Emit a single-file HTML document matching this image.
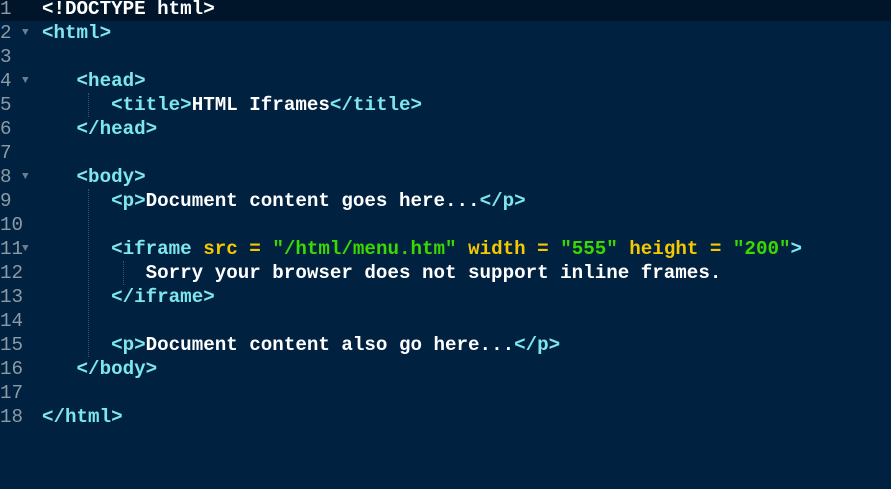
<!DOCTYPE html>
<html><head><style>
html,body{margin:0;padding:0;width:891px;height:489px;overflow:hidden;background:#002240;}
.ed{position:relative;font-family:"Liberation Mono",monospace;font-size:19.2px;font-weight:bold;}
.l{position:absolute;left:0;height:24px;line-height:24px;width:891px;white-space:pre;}
.n{position:absolute;left:0;width:16px;text-align:left;color:#8c9aa6;font-weight:normal;}
.f{position:absolute;left:22px;color:#6a7d8d;font-size:11px;font-weight:normal;}
.c{position:absolute;left:42px;color:#fff;}
.t{color:#7ee6ee}.a{color:#f5c800}.s{color:#3ad900}
.act{background:#00152a;}
.g{position:absolute;width:0;border-left:1px dotted #3a5570;}
</style></head><body><div class="ed">
<div class="l act" style="top:-3px"><span class="n">1</span><span class="c"><span>&lt;!DOCTYPE html&gt;</span></span></div>
<div class="l" style="top:21px"><span class="n">2</span><span class="f">▼</span><span class="c t">&lt;html&gt;</span></div>
<div class="l" style="top:45px"><span class="n">3</span></div>
<div class="l" style="top:69px"><span class="n">4</span><span class="f">▼</span><span class="c">   <span class="t">&lt;head&gt;</span></span></div>
<div class="l" style="top:93px"><span class="n">5</span><span class="c">      <span class="t">&lt;title&gt;</span>HTML Iframes<span class="t">&lt;/title&gt;</span></span></div>
<div class="l" style="top:117px"><span class="n">6</span><span class="c">   <span class="t">&lt;/head&gt;</span></span></div>
<div class="l" style="top:141px"><span class="n">7</span></div>
<div class="l" style="top:165px"><span class="n">8</span><span class="f">▼</span><span class="c">   <span class="t">&lt;body&gt;</span></span></div>
<div class="l" style="top:189px"><span class="n">9</span><span class="c">      <span class="t">&lt;p&gt;</span>Document content goes here...<span class="t">&lt;/p&gt;</span></span></div>
<div class="l" style="top:213px"><span class="n">10</span></div>
<div class="l" style="top:237px"><span class="n">11</span><span class="f">▼</span><span class="c">      <span class="t">&lt;iframe </span><span class="a">src = </span><span class="s">"/html/menu.htm"</span> <span class="a">width = </span><span class="s">"555"</span> <span class="a">height = </span><span class="s">"200"</span><span class="t">&gt;</span></span></div>
<div class="l" style="top:261px"><span class="n">12</span><span class="c">         Sorry your browser does not support inline frames.</span></div>
<div class="l" style="top:285px"><span class="n">13</span><span class="c">      <span class="t">&lt;/iframe&gt;</span></span></div>
<div class="l" style="top:309px"><span class="n">14</span></div>
<div class="l" style="top:333px"><span class="n">15</span><span class="c">      <span class="t">&lt;p&gt;</span>Document content also go here...<span class="t">&lt;/p&gt;</span></span></div>
<div class="l" style="top:357px"><span class="n">16</span><span class="c">   <span class="t">&lt;/body&gt;</span></span></div>
<div class="l" style="top:381px"><span class="n">17</span></div>
<div class="l" style="top:405px"><span class="n">18</span><span class="c t">&lt;/html&gt;</span></div>
<div class="g" style="left:88px;top:93px;height:24px"></div>
<div class="g" style="left:88px;top:189px;height:168px"></div>
<div class="g" style="left:123px;top:261px;height:24px"></div>
</div></body></html>
